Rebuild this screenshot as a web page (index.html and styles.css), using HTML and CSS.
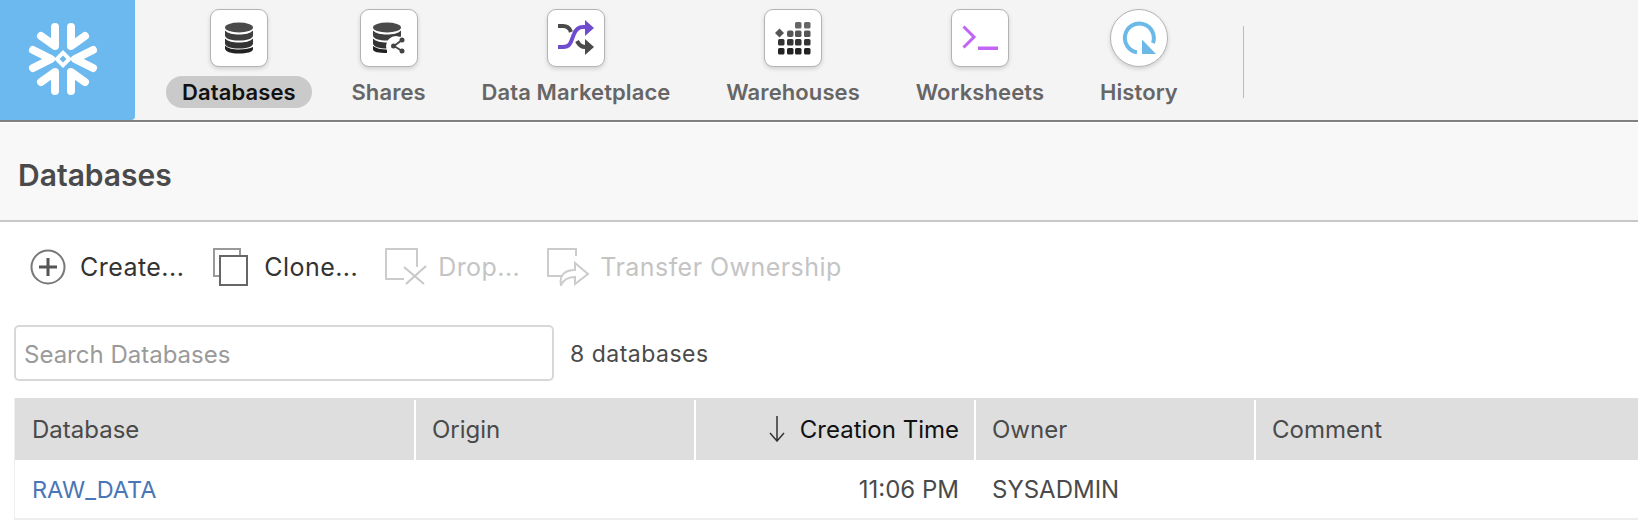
FILE: index.html
```html
<!DOCTYPE html>
<html lang="en">

<head>
    <meta charset="UTF-8">
    <title>Databases</title>
    <link rel="stylesheet" href="styles.css">
</head>

<body>
    <header class="topbar">
        <div class="logo">
            <svg width="74" height="74" viewBox="0 0 74 74">
                <g class="flake">
                    <path d="M29 5 V24 L15 14" />
                    <path d="M45 5 V24 L59 14" />
                    <path d="M7 28 L25 37 L7 46" />
                    <path d="M67 28 L49 37 L67 46" />
                    <path d="M29 69 V50 L15 60" />
                    <path d="M45 69 V50 L59 60" />
                </g>
                <path class="flake-core" d="M37 28 L46 37 L37 46 L28 37 Z M37 33.500 L33.500 37 L37 40.500 L40.500 37 Z" />
            </svg>
        </div>
        <nav class="nav">
            <a class="nav-item active">
                <span class="tile">
                    <svg width="30" height="32" viewBox="0 0 30 32">
                        <ellipse cx="15" cy="5.500" rx="14" ry="5" fill="#4a4a4a" />
                        <path d="M1 8.500c3 3 8 4 14 4s11-1 14-4v5c0 3-6 5-14 5s-14-2-14-5z" fill="#3e3e3e" />
                        <path d="M1 16.500c3 3 8 4 14 4s11-1 14-4v5c0 3-6 5-14 5s-14-2-14-5z" fill="#333" />
                        <path d="M1 23.500c3 3 8 4 14 4s11-1 14-2.500v2c0 3-6 4.500-14 4.500s-14-2-14-5z" fill="#222" />
                    </svg>
                </span>
                <span class="nav-label">Databases</span>
            </a>
            <a class="nav-item">
                <span class="tile">
                    <svg width="32" height="32" viewBox="0 0 32 32">
                        <ellipse cx="14" cy="5.500" rx="14" ry="5" fill="#4a4a4a" />
                        <path d="M0 8.500c3 3 8 4 14 4s11-1 14-4v5c0 3-6 5-14 5s-14-2-14-5z" fill="#3e3e3e" />
                        <path d="M0 16.500c3 3 8 4 14 4s11-1 14-4v5c0 3-6 5-14 5s-14-2-14-5z" fill="#333" />
                        <path d="M0 24c3 2.500 8 3.500 14 3.500v3.500c-8 0-14-1-14-3.500z" fill="#222" />
                        <circle cx="23" cy="24" r="10" fill="#fff" />
                        <path d="M29 18 L21 24 L29 29" fill="none" stroke="#444" stroke-width="1.800" />
                        <circle cx="29" cy="18" r="2.500" fill="#444" />
                        <circle cx="20.500" cy="24" r="2.500" fill="#444" />
                        <circle cx="29" cy="29" r="2.500" fill="#444" />
                    </svg>
                </span>
                <span class="nav-label">Shares</span>
            </a>
            <a class="nav-item">
                <span class="tile">
                    <svg width="36" height="36" viewBox="0 0 36 36">
                        <path d="M0 6h5c5 0 7 3 8 6" fill="none" stroke="#4a4a4a" stroke-width="4" />
                        <path d="M19 21c2 4 4 6 8 6h2" fill="none" stroke="#4a4a4a" stroke-width="4" />
                        <path d="M27 19 L36 27 L27 35 Z" fill="#4a4a4a" />
                        <path d="M0 27h5c8 0 8-6 11-13 2-5 5-7 9-7h4" fill="none" stroke="#6f4bd0" stroke-width="4" />
                        <path d="M27 0 L36 8 L27 16 Z" fill="#6f4bd0" />
                    </svg>
                </span>
                <span class="nav-label">Data Marketplace</span>
            </a>
            <a class="nav-item">
                <span class="tile">
                    <svg width="36" height="33" viewBox="0 0 36 33">
                        <rect x="20" y="0" width="6.500" height="6.500" rx="1.500" fill="#666" />
                        <rect x="29" y="0" width="6.500" height="6.500" rx="1.500" fill="#666" />
                        <path d="M4.500 6.500 L9 11 L4.500 15.500 L0 11 Z" fill="#555" />
                        <rect x="12" y="8.500" width="6.500" height="6.500" rx="2" fill="#555" />
                        <rect x="20" y="8.500" width="6.500" height="6.500" rx="1.500" fill="#555" />
                        <rect x="29" y="8.500" width="6.500" height="6.500" rx="1.500" fill="#555" />
                        <rect x="3" y="17" width="6.500" height="6.500" rx="1.500" fill="#333" />
                        <rect x="12" y="17" width="6.500" height="6.500" rx="1.500" fill="#333" />
                        <rect x="20" y="17" width="6.500" height="6.500" rx="1.500" fill="#333" />
                        <rect x="29" y="17" width="6.500" height="6.500" rx="1.500" fill="#333" />
                        <rect x="3" y="26" width="6.500" height="6.500" rx="1.500" fill="#222" />
                        <rect x="12" y="26" width="6.500" height="6.500" rx="1.500" fill="#222" />
                        <rect x="20" y="26" width="6.500" height="6.500" rx="1.500" fill="#222" />
                        <rect x="29" y="26" width="6.500" height="6.500" rx="1.500" fill="#222" />
                    </svg>
                </span>
                <span class="nav-label">Warehouses</span>
            </a>
            <a class="nav-item">
                <span class="tile">
                    <svg width="36" height="26" viewBox="0 0 36 26">
                        <path d="M1.500 1.500 L12 12 L1.500 22.500" fill="none" stroke="#c264f5" stroke-width="3" />
                        <rect x="16" y="21.500" width="20" height="3.500" fill="#c264f5" />
                    </svg>
                </span>
                <span class="nav-label">Worksheets</span>
            </a>
            <a class="nav-item">
                <span class="tile round">
                    <svg width="36" height="34" viewBox="0 0 36 34">
                        <path d="M16 31.400 A14.500 14.500 0 1 1 32 22" fill="none" stroke="#6cb9e8" stroke-width="4" />
                        <path d="M21 18.500 L35 33 L21 33 Z" fill="#6cb9e8" />
                    </svg>
                </span>
                <span class="nav-label">History</span>
            </a>
            <span class="nav-divider"></span>
        </nav>
    </header>

    <div class="title-bar">
        <h1>Databases</h1>
    </div>

    <div class="actions">
        <a class="action action-create">
            <svg width="36" height="36" viewBox="0 0 36 36">
                <circle cx="18" cy="18" r="16.500" fill="none" stroke="#777" stroke-width="2" />
                <path d="M18 9v18M9 18h18" stroke="#555" stroke-width="3" />
            </svg>
            Create...
        </a>
        <a class="action action-clone">
            <svg width="36" height="38" viewBox="0 0 36 38">
                <path d="M7 28H1V1h26v7" fill="none" stroke="#999" stroke-width="2" />
                <rect x="7" y="8" width="27" height="29" fill="none" stroke="#666" stroke-width="2" />
            </svg>
            Clone...
        </a>
        <a class="action action-drop disabled">
            <svg width="44" height="38" viewBox="0 0 44 38">
                <path d="M19 31H1V1h31v18" fill="none" stroke="#ccc" stroke-width="2" />
                <path d="M19 19l20 17M41 18L21 36" stroke="#c8c8c8" stroke-width="2" />
            </svg>
            Drop...
        </a>
        <a class="action action-transfer disabled">
            <svg width="44" height="38" viewBox="0 0 44 38">
                <path d="M15 28H1V1h28v7" fill="none" stroke="#ccc" stroke-width="2" />
                <path d="M14 37c-2-9 3-15 14-15v-7l13 11-13 10v-7c-7 0-11 2-14 8z" fill="none" stroke="#ccc" stroke-width="2" />
            </svg>
            Transfer Ownership
        </a>
    </div>

    <div class="search-row">
        <input class="search" type="text" placeholder="Search Databases">
        <span class="count">8 databases</span>
    </div>

    <div class="table">
        <div class="row head">
            <div class="cell col-name">Database</div>
            <div class="cell col-origin">Origin</div>
            <div class="cell col-time sorted">
                <svg width="16" height="26" viewBox="0 0 16 26">
                    <path d="M8 0v24M1 17l7 8 7-8" fill="none" stroke="#333" stroke-width="1.500" />
                </svg>
                Creation Time
            </div>
            <div class="cell col-owner">Owner</div>
            <div class="cell col-comment">Comment</div>
        </div>
        <div class="row">
            <div class="cell col-name"><a class="db-link">RAW_DATA</a></div>
            <div class="cell col-origin"></div>
            <div class="cell col-time">11:06 PM</div>
            <div class="cell col-owner">SYSADMIN</div>
            <div class="cell col-comment"></div>
        </div>
    </div>
</body>

</html>
```

FILE: styles.css
```css
html,
body {
    margin: 0;
    height: 526px;
    overflow: hidden;
}

body {
    font-family: Inter, "Noto Sans", sans-serif;
    background-color: #fff;
    color: #4a4a4a;
}

.topbar {
    display: flex;
    height: 120px;
    background-color: #f4f4f4;
    border-bottom: 2px solid #808080;
}

.logo {
    display: flex;
    justify-content: center;
    align-items: center;
    box-sizing: border-box;
    width: 135px;
    height: 120px;
    padding: 0 10px 2px 0;
    background-color: #6cb9f0;
    border-bottom-right-radius: 4px;
}

.flake path {
    fill: none;
    stroke: #fff;
    stroke-width: 8;
    stroke-linecap: round;
    stroke-linejoin: round;
}

.flake-core {
    fill: #fff;
    fill-rule: evenodd;
}

.nav {
    display: flex;
    gap: 23.750px;
    flex: 1;
    padding: 9px 0 0 31px;
}

.nav-item {
    display: flex;
    flex-direction: column;
    align-items: center;
    white-space: nowrap;
}

.tile {
    display: flex;
    justify-content: center;
    align-items: center;
    box-sizing: border-box;
    width: 58px;
    height: 58px;
    background-color: white;
    border: 1px solid #b4b4b4;
    border-radius: 9px;
    box-shadow: 0 2px 4px rgba(0, 0, 0, 0.15);
}

.tile.round {
    border-radius: 50%;
}

.nav-label {
    margin-top: 9px;
    padding: 0 16px;
    height: 32px;
    line-height: 32px;
    border-radius: 16px;
    font-size: 22px;
    font-weight: 600;
    letter-spacing: 0.1px;
    color: #666;
}

.active .nav-label {
    background-color: #cacaca;
    color: #111;
}

.nav-divider {
    width: 1px;
    height: 72px;
    margin: 17px 0 0 25px;
    background-color: #bbb;
}

.title-bar {
    display: flex;
    align-items: center;
    box-sizing: border-box;
    height: 99px;
    margin-top: 1px;
    padding: 7px 0 0 18px;
    background-color: #f8f8f8;
    border-bottom: 2px solid #c8c8c8;
}

h1 {
    margin: 0;
    font-size: 30px;
    font-weight: 600;
    color: #4a4a4a;
}

.actions {
    display: flex;
    align-items: center;
    height: 90px;
    font-size: 25px;
    letter-spacing: 0.45px;
}

.action {
    display: flex;
    align-items: center;
    gap: 9px;
    margin-left: 27px;
    color: #333;
    white-space: nowrap;
}

.action-create { margin-left: 30px; gap: 14px; }
.action-clone { margin-left: 29px; gap: 15px; }

.disabled {
    color: #c4c4c4;
}

.search-row {
    display: flex;
    align-items: center;
    gap: 16px;
    height: 56px;
    margin-left: 14px;
    margin-top: 13px;
}

.search {
    box-sizing: border-box;
    width: 540px;
    height: 56px;
    padding: 3px 8px 0;
    font-family: Inter, "Noto Sans", sans-serif;
    font-size: 24px;
    background-color: white;
    border: 2px solid #d8d8d8;
    border-radius: 5px;
}

.search::placeholder {
    color: #9a9a9a;
}

.count {
    font-size: 23px;
    letter-spacing: 0.5px;
    color: #4a4a4a;
    margin-top: 1px;
}

.table {
    margin-left: 14px;
    margin-top: 17px;
    font-size: 24px;
    border-left: 1px solid #eee;
}

.row {
    display: flex;
    height: 58px;
    border-bottom: 2px solid #eee;
}

.row.head {
    height: 62px;
    background-color: #dedede;
    border-bottom: none;
}

.cell {
    display: flex;
    align-items: center;
    box-sizing: border-box;
    padding: 0 17px;
    height: 100%;
    white-space: nowrap;
}

.head .cell {
    position: relative;
}

.head .cell + .cell::before {
    content: "";
    position: absolute;
    left: -2px;
    top: 2px;
    bottom: 0;
    width: 2px;
    background-color: white;
}

.col-name { width: 401px; }
.col-origin { width: 280px; padding-left: 16px; }
.col-time {
    width: 280px;
    justify-content: flex-end;
}
.col-owner { width: 280px; padding-left: 16px; }
.col-comment { flex: 1; padding-left: 16px; }

.sorted {
    gap: 15px;
    color: #111;
}

.db-link {
    font-size: 23.500px;
    color: #4a76b5;
}
```
